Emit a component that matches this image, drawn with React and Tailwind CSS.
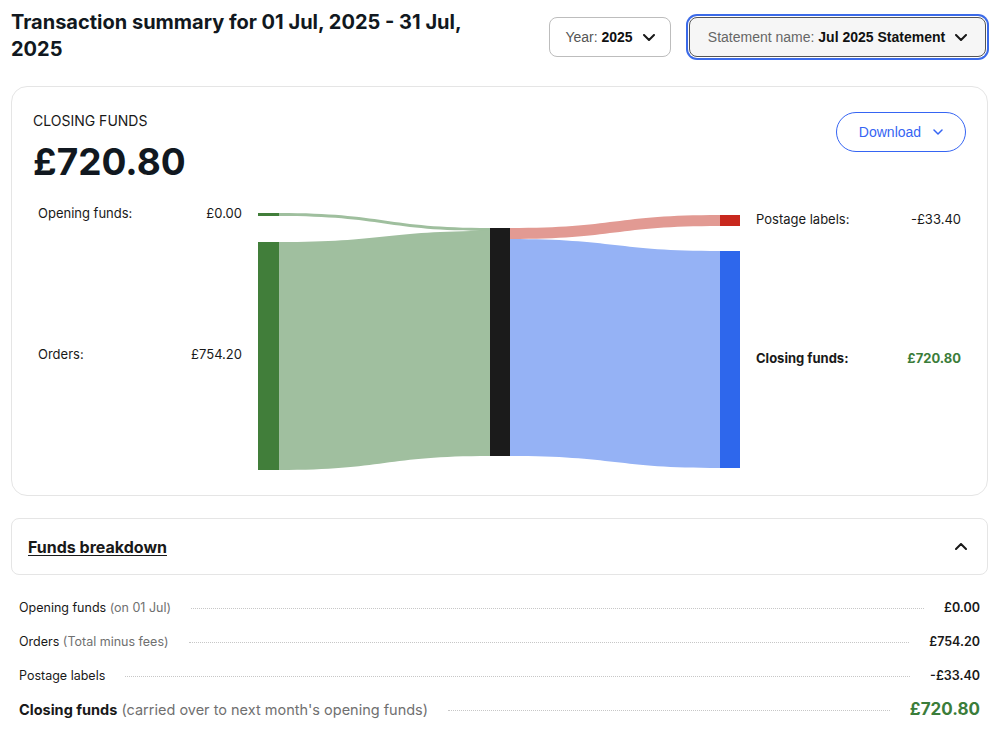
import React from "react";

const GREEN = "#3b7d3a";

function Chevron({ className = "", up = false, w = 12, h = 7, stroke = 2 }) {
  return (
    <svg width={w} height={h} viewBox={`0 0 ${w} ${h}`} className={className} fill="none">
      <path
        d={up ? `M1 ${h - 1}L${w / 2} 1L${w - 1} ${h - 1}` : `M1 1L${w / 2} ${h - 1}L${w - 1} 1`}
        stroke="currentColor"
        strokeWidth={stroke}
        strokeLinecap="round"
        strokeLinejoin="round"
      />
    </svg>
  );
}

function link(x0, a0, b0, x1, a1, b1) {
  const m = (x0 + x1) / 2;
  return `M${x0},${a0} C${m},${a0} ${m},${a1} ${x1},${a1} L${x1},${b1} C${m},${b1} ${m},${b0} ${x0},${b0} Z`;
}

function Sankey() {
  return (
    <svg width="933" height="280" viewBox="0 0 933 280" className="mt-4 block" style={{ fontFamily: "Inter, sans-serif" }}>
      <path d={link(246, 13, 16, 457, 28, 31)} fill="#9fbf9e" />
      <path d={link(246, 42, 270, 457, 31, 256)} fill="#a0bf9f" />
      <path d={link(477, 28, 39, 687, 15, 26)} fill="#e29a93" />
      <path d={link(477, 39, 256, 687, 51, 268)} fill="#95b2f5" />

      <rect x="225" y="13" width="21" height="3" fill="#417e3a" />
      <rect x="225" y="42" width="21" height="228" fill="#417e3a" />
      <rect x="457" y="28" width="20" height="228" fill="#1b1b1b" />
      <rect x="687" y="15" width="20" height="11" fill="#c8281e" />
      <rect x="687" y="51" width="20" height="217" fill="#2e67ec" />

      <g fontSize="13" fill="#191919" dominantBaseline="central">
        <text x="5" y="13">Opening funds:</text>
        <text x="209" y="13" textAnchor="end">£0.00</text>
        <text x="5" y="154">Orders:</text>
        <text x="209" y="154" textAnchor="end">£754.20</text>
        <text x="723" y="19">Postage labels:</text>
        <text x="928" y="19" textAnchor="end">-£33.40</text>
        <text x="723" y="158" fontWeight="700">Closing funds:</text>
        <text x="928" y="158" textAnchor="end" fontWeight="700" fill={GREEN}>£720.80</text>
      </g>
    </svg>
  );
}

function Row({ label, note, value, big }) {
  return (
    <div className="flex h-[34px] items-center">
      <span className={big ? "text-[14.5px]" : "text-[12.5px]"}>
        <span className={big ? "font-bold text-[#191919]" : "text-[#191919]"}>{label}</span>
        {note && <span className="text-[#707070]"> {note}</span>}
      </span>
      <span className="mx-5 h-0 flex-1 border-b border-dotted border-[#c7c7c7]" />
      <span
        className={big ? "text-[17px] font-bold" : "text-[12.5px] font-semibold text-[#191919]"}
        style={big ? { color: GREEN } : undefined}
      >
        {value}
      </span>
    </div>
  );
}

export default function App() {
  return (
    <div className="min-h-[750px] bg-white pl-[11px] pr-[12px] text-[#191919]" style={{ fontFamily: "Inter, sans-serif" }}>
      <div className="flex items-start justify-between">
        <h1 className="w-[500px] pt-[9px] text-[20px] font-bold leading-[27px] text-[#111820]">
          Transaction summary for 01 Jul, 2025 - 31 Jul, 2025
        </h1>
        <div className="mr-[2px] mt-[17px] flex items-center gap-[18px]" style={{ fontFamily: "'Liberation Sans', Arial, sans-serif" }}>
          <button className="flex h-10 w-[122px] items-center justify-center gap-[10px] rounded-lg border border-[#bdbdbd] bg-white text-[14px]">
            <span className="text-[#555]">
              Year: <b className="text-[#111]">2025</b>
            </span>
            <Chevron />
          </button>
          <button className="flex h-10 w-[297px] items-center justify-center gap-[10px] rounded-lg border border-[#555] bg-[#f6f6f6] text-[14px] ring-2 ring-[#3b6ae8] ring-offset-1">
            <span className="text-[#666]">
              Statement name: <b className="text-[#111]">Jul 2025 Statement</b>
            </span>
            <Chevron />
          </button>
        </div>
      </div>

      <div className="mt-[23px] rounded-2xl border border-[#e5e5e5] pb-[15px] pl-[21px] pr-5 pt-6">
        <div className="flex items-start justify-between">
          <div>
            <div className="text-[14px] leading-5 text-[#191919]">CLOSING FUNDS</div>
            <div className="mt-[9px] text-[37px] font-bold leading-[44px] text-[#111820]">£720.80</div>
          </div>
          <button
            className="mr-[1px] mt-px flex h-10 w-[130px] items-center justify-center gap-3 rounded-full border border-[#3665f3] text-[14px] text-[#3665f3]"
            style={{ fontFamily: "'Liberation Sans', Arial, sans-serif" }}
          >
            Download
            <Chevron w={10} h={6} stroke={1.5} />
          </button>
        </div>
        <Sankey />
      </div>

      <div className="mt-[22px] flex h-[57px] items-center justify-between rounded-lg border border-[#e5e5e5] pl-4 pr-5">
        <span className="text-[16px] font-bold underline underline-offset-2">Funds breakdown</span>
        <Chevron up className="text-[#191919]" />
      </div>

      <div className="mt-4 px-2">
        <Row label="Opening funds" note="(on 01 Jul)" value="£0.00" />
        <Row label="Orders" note="(Total minus fees)" value="£754.20" />
        <Row label="Postage labels" value="-£33.40" />
        <Row label="Closing funds" note="(carried over to next month's opening funds)" value="£720.80" big />
      </div>
    </div>
  );
}
